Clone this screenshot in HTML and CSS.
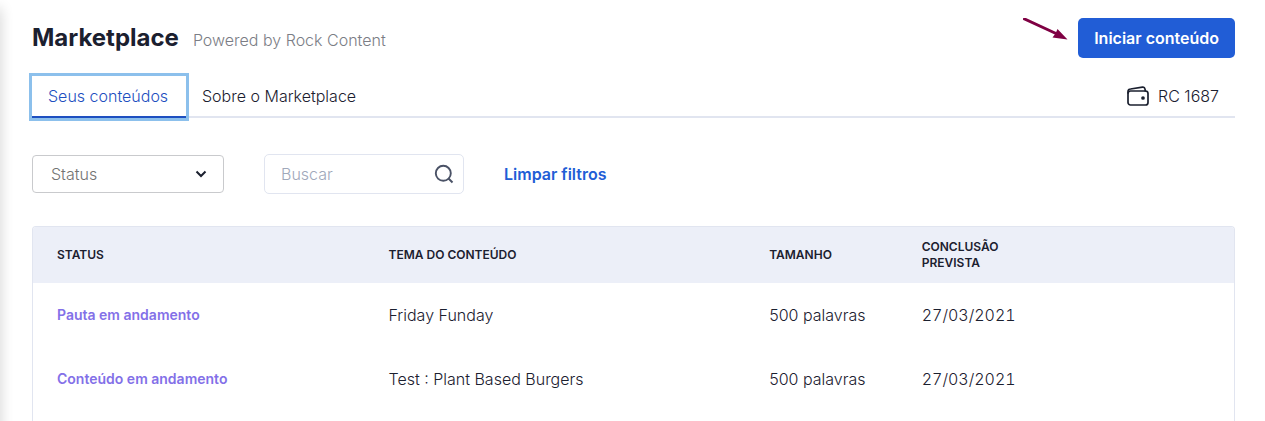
FILE: index.html
```
<!DOCTYPE html>
<html lang="pt-BR">
<head>
  <meta charset="UTF-8">
  <meta name="viewport" content="width=device-width, initial-scale=1">
  <title>Marketplace</title>
  <link rel="stylesheet" href="styles.css">
</head>
<body>
  <div class="page">
    <!-- Header -->
    <header class="header">
      <h1>Marketplace</h1>
      <span class="powered">Powered by Rock Content</span>
      <div class="header-actions">
        <svg class="arrow" width="46" height="24" viewBox="0 0 46 24" aria-hidden="true">
          <path d="M2.500 1L34 15.500" fill="none" stroke="#7f0043" stroke-width="3" stroke-linecap="round"/>
          <path d="M35.500 11L45.500 21.500L30.500 19.500L33.500 15.500Z" fill="#7f0043"/>
        </svg>
        <button class="btn-primary" type="button">Iniciar conteúdo</button>
      </div>
    </header>

    <!-- Tabs -->
    <nav class="tabs">
      <a class="tab active" href="#conteudos">Seus conteúdos</a>
      <a class="tab" href="#sobre">Sobre o Marketplace</a>
      <div class="wallet">
        <svg width="24" height="22" viewBox="0 0 24 22" fill="none" stroke="#1b202f" stroke-width="1.700" stroke-linejoin="round" stroke-linecap="round" aria-hidden="true">
          <rect x="2" y="6" width="20" height="14" rx="2.500"/>
          <path d="M2 8V6.500C2 5 2.800 4.200 4.500 4L16.500 2.200C18 2 18.800 2.600 19 4L19.300 6"/>
          <circle cx="17" cy="13" r="1" fill="#1b202f"/>
        </svg>
        <span>RC 1687</span>
      </div>
    </nav>

    <!-- Filters -->
    <form class="filters">
      <div class="select-box">
        <select aria-label="Status">
          <option>Status</option>
        </select>
        <svg class="chevron" width="12" height="8" viewBox="0 0 12 8" aria-hidden="true">
          <path d="M1.500 1.500L6 6L10.500 1.500" fill="none" stroke="#1b202f" stroke-width="2"/>
        </svg>
      </div>
      <div class="search-box">
        <input type="text" placeholder="Buscar" aria-label="Buscar">
        <svg width="20" height="20" viewBox="0 0 20 20" fill="none" stroke="#4a5266" stroke-width="1.900" aria-hidden="true">
          <circle cx="9.300" cy="9.300" r="7.500"/>
          <path d="M14.500 14.500L18.500 18.500"/>
        </svg>
      </div>
      <button class="btn-clear" type="reset">Limpar filtros</button>
    </form>

    <!-- Content list -->
    <div class="panel">
      <table>
        <colgroup>
          <col class="col-status">
          <col class="col-topic">
          <col class="col-size">
          <col class="col-date">
        </colgroup>
        <thead>
          <tr>
            <th>Status</th>
            <th>Tema do conteúdo</th>
            <th>Tamanho</th>
            <th>Conclusão<br>prevista</th>
          </tr>
        </thead>
        <tbody>
          <tr>
            <td class="status">Pauta em andamento</td>
            <td>Friday Funday</td>
            <td>500 palavras</td>
            <td class="date">27/03/2021</td>
          </tr>
          <tr>
            <td class="status">Conteúdo em andamento</td>
            <td>Test : Plant Based Burgers</td>
            <td>500 palavras</td>
            <td class="date">27/03/2021</td>
          </tr>
        </tbody>
      </table>
    </div>
  </div>
</body>
</html>
```
FILE: styles.css
```
:root {
  --blue: #215dd6;
  --blue-dark: #1d4fc0;
  --focus: #8cc0ec;
  --text: #1b202f;
  --muted: #7b7d85;
  --line: #e1e5f0;
  --head-bg: #eceff8;
  --purple: #8370e8;
}
* {box-sizing: border-box; margin: 0; padding: 0;}
body {
  font-family: Inter, "Liberation Sans", sans-serif;
  font-size: 16px;
  font-weight: 300;
  line-height: 24px;
  background: #fff;
  color: var(--text);
}
/* shadow cast by the side menu */
body::before {
  content: "";
  position: fixed;
  top: 8px;
  bottom: -20px;
  left: -10px;
  width: 10px;
  box-shadow: 0 0 14px rgba(0, 0, 0, .2);
}
button, input, select {font: inherit;}

.page {
  display: flex;
  flex-direction: column;
  min-height: 100vh;
  padding: 18px 30px 0 32px;
}

/* Header */
.header {display: flex; align-items: center; height: 40px;}
h1 {font-size: 24px; font-weight: 700; line-height: 32px;}
.powered {margin: 4px 0 0 14px; color: var(--muted);}
.header-actions {display: flex; align-items: flex-start; gap: 10px; margin-left: auto;}
.btn-primary {
  height: 40px;
  padding: 0 16px;
  border: none;
  border-radius: 5px;
  background: var(--blue);
  color: #fff;
  font-weight: 600;
}

/* Tabs */
.tabs {
  display: flex;
  margin-top: 18px;
  box-shadow: inset 0 -2px var(--line);
}
.tab {
  min-width: 154px;
  height: 42px;
  padding: 8px 16px;
  border-bottom: 2px solid transparent;
  color: var(--text);
  text-decoration: none;
}
.tab.active {
  border-color: var(--blue-dark);
  color: var(--blue-dark);
  outline: 3px solid var(--focus);
}
.wallet {
  display: flex;
  align-items: center;
  gap: 8px;
  margin-left: auto;
  padding: 0 16px 2px 0;
}

/* Filters */
.filters {display: flex; align-items: center; gap: 40px; margin-top: 36px;}
.select-box, .search-box {position: relative;}
.select-box {width: 192px;}
.select-box select {
  width: 100%;
  height: 38px;
  padding: 0 18px;
  border: 1px solid #c9cacd;
  border-radius: 4px;
  background: #fff;
  color: #737373;
  appearance: none;
}
.chevron {position: absolute; top: 15px; right: 17px; pointer-events: none;}
.search-box {width: 200px;}
.search-box input {
  width: 100%;
  height: 40px;
  padding: 0 40px 0 16px;
  border: 1px solid var(--line);
  border-radius: 5px;
  color: var(--text);
  display: block;
}
.search-box input::placeholder {color: #a0a8ba; opacity: 1;}
.search-box svg {position: absolute; top: 10px; right: 10px;}
.btn-clear {
  border: none;
  background: none;
  color: var(--blue);
  font-weight: 600;
}

/* Content list */
.panel {
  flex: 1;
  margin-top: 32px;
  border: 1px solid var(--line);
  border-bottom: none;
  border-radius: 4px 4px 0 0;
  overflow: hidden;
}
table {width: 100%; border-collapse: collapse; table-layout: fixed;}
.col-status {width: 27.6%;}
.col-topic {width: 31.7%;}
.col-size {width: 12.7%;}
.col-date {width: 28%;}
th, td {padding: 0 24px; text-align: left;}
th {
  height: 56px;
  background: var(--head-bg);
  font-size: 12px;
  font-weight: 600;
  line-height: 16px;
  text-transform: uppercase;
}
td {height: 64px; white-space: nowrap;}
.status {color: var(--purple); font-size: 14px; font-weight: 600;}
.date {font-variant-numeric: tabular-nums;}
```
